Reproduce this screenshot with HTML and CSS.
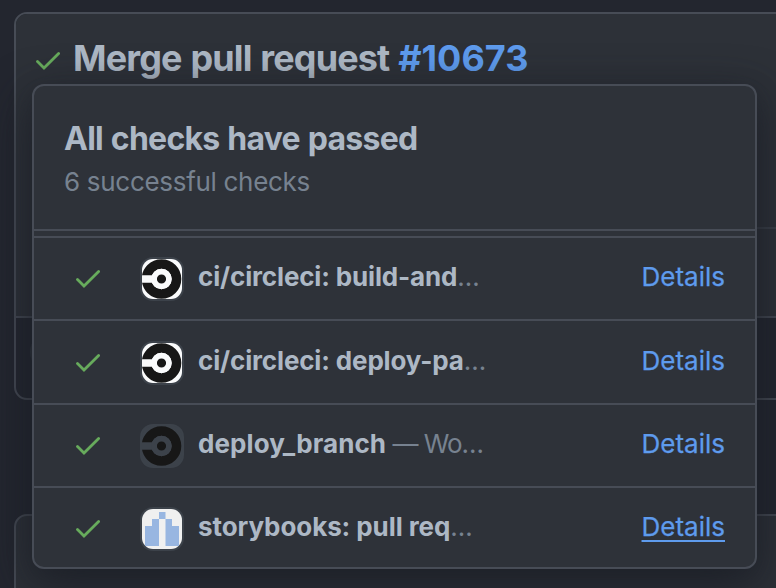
FILE: index.html
```html
<!DOCTYPE html>
<html lang="en">
<head>
<meta charset="utf-8">
<title>Checks</title>
<link rel="stylesheet" href="styles.css">
</head>
<body>
<svg class="defs" width="0" height="0" aria-hidden="true">
  <symbol id="check" viewBox="0 0 24 18"><path d="M1.5 9.5 8 16 22.6 1.5" fill="none" stroke="currentColor" stroke-width="2.8" stroke-linecap="round" stroke-linejoin="miter"/></symbol>
  <symbol id="circle" viewBox="0 0 40 40"><circle cx="19.5" cy="20" r="15" fill="none" stroke="#171717" stroke-width="9.6"/><path d="M0 16.2H12V23.8H0z" fill="currentColor"/><circle cx="19.5" cy="20" r="7.4" fill="#171717" stroke="currentColor" stroke-width="5.6"/></symbol>
</svg>
<main class="page">
  <section class="commit">
    <header class="commit-head">
      <svg class="check"><use href="#check"/></svg>
      <h1>Merge pull request <a>#10673</a></h1>
    </header>
    <div class="commit-body"><div class="commit-line"></div></div>
    <footer class="commit-foot"><span class="dot"></span></footer>
  </section>
  <section class="next"></section>
</main>
<aside class="popup">
  <header class="summary">
    <h2>All checks have passed</h2>
    <p>6 successful checks</p>
  </header>
  <ul class="checks">
    <li><svg class="check"><use href="#check"/></svg><span class="avatar white"><svg><use href="#circle"/></svg></span><span class="name"><b>ci/circleci: build-and</b>…</span><a class="details">Details</a></li>
    <li><svg class="check"><use href="#check"/></svg><span class="avatar white"><svg><use href="#circle"/></svg></span><span class="name"><b>ci/circleci: deploy-pa</b>…</span><a class="details">Details</a></li>
    <li><svg class="check"><use href="#check"/></svg><span class="avatar clear"><svg><use href="#circle"/></svg></span><span class="name tight"><b class="branch">deploy_branch</b> — Wo…</span><a class="details">Details</a></li>
    <li><svg class="check"><use href="#check"/></svg><span class="avatar pale"><svg viewBox="0 0 40 40"><path d="M3 37V17H10V10H17V3H23.5V10H30V17H37V37H23.5V10H17V37Z" fill="#98b6e1"/></svg></span><span class="name"><b class="story">storybooks: pull req</b>…</span><a class="details active">Details</a></li>
  </ul>
</aside>
</body>
</html>
```
FILE: styles.css
```css
* { box-sizing: border-box; }
body { margin: 0; width: 776px; height: 588px; overflow: hidden; position: relative; background: #23262f; font-family: Inter, sans-serif; color: #adb8c5; }
h1, h2, p, ul { margin: 0; padding: 0; list-style: none; }
.defs { position: absolute; }
.page { display: flex; flex-direction: column; gap: 114px; padding: 12px 0 0 14px; height: 588px; overflow: hidden; }
.commit { flex: none; height: 388px; width: 800px; border: 2px solid #474c56; border-radius: 13px; overflow: hidden; display: flex; flex-direction: column; }
.commit-head { height: 213px; background: #2d3138; display: flex; align-items: flex-start; padding: 22px 0 0 20px; }
.commit-head .check { margin-top: 16px; }
.commit-body { height: 89px; background: #2d3138; }
.commit-line { margin-left: 40px; height: 2px; background: #3b4049; }
.commit-foot { flex: 1; border-top: 2px solid #454a54; padding: 14px; }
.dot { display: block; width: 40px; height: 40px; border-radius: 50%; background: #30353d; }
.check { width: 24px; height: 18px; flex: none; color: #67ab5c; overflow: visible; }
h1 { font-size: 36px; line-height: 44px; font-weight: 650; margin-left: 13px; letter-spacing: -.85px; word-spacing: 1px; white-space: nowrap; }
h1 a { color: #5e9bed; font-weight: 700; letter-spacing: .05px; }
.next { flex: none; height: 100px; width: 800px; border: 2px solid #474c56; border-radius: 13px; background: #2d3138; }
.popup { position: absolute; left: 32px; top: 84px; width: 725px; height: 485px; border: 2px solid #474c56; border-radius: 12px; background: #2e3239; box-shadow: 0 16px 48px rgba(28, 31, 39, .9), 0 8px 24px rgba(28, 31, 39, .3); overflow: hidden; }
.summary { height: 145px; padding: 34px 30px 0; border-bottom: 2px solid #474c56; }
h2 { font-size: 32px; line-height: 38px; font-weight: 650; letter-spacing: -.75px; word-spacing: 1px; white-space: nowrap; }
.summary p { font-size: 26px; line-height: 32px; margin-top: 8px; color: #778290; letter-spacing: -.3px; white-space: nowrap; }
.checks { padding-top: 5px; }
.checks li { display: flex; align-items: center; height: 83px; border-top: 2px solid #474c56; padding: 1px 30px 0 42px; }
.checks li:nth-child(2) { height: 84px; }
.avatar { width: 40px; height: 40px; margin-left: 42px; border-radius: 11px; overflow: hidden; box-shadow: 0 0 0 2px #3c424a; flex: none; }
.avatar svg { width: 40px; height: 40px; display: block; }
.white { background: #fafbfc; color: #fafbfc; }
.clear { background: #3c424a; color: #3c424a; }
.pale { background: #f0f0f0; }
.name { margin-left: 16px; padding-bottom: 4px; font-size: 26px; line-height: 34px; color: #778290; letter-spacing: -.7px; white-space: nowrap; }
.tight { letter-spacing: -1px; }
.name b { font-weight: 650; color: #adb8c5; letter-spacing: -.15px; }
.name .branch { letter-spacing: .08px; }
.name .story { letter-spacing: -.08px; }
.details { margin-left: auto; padding-bottom: 4px; font-size: 26px; line-height: 32px; color: #5e9bed; -webkit-text-stroke: .25px currentColor; }
.active { text-decoration: underline; text-decoration-thickness: 2px; text-underline-offset: 4px; }
```
